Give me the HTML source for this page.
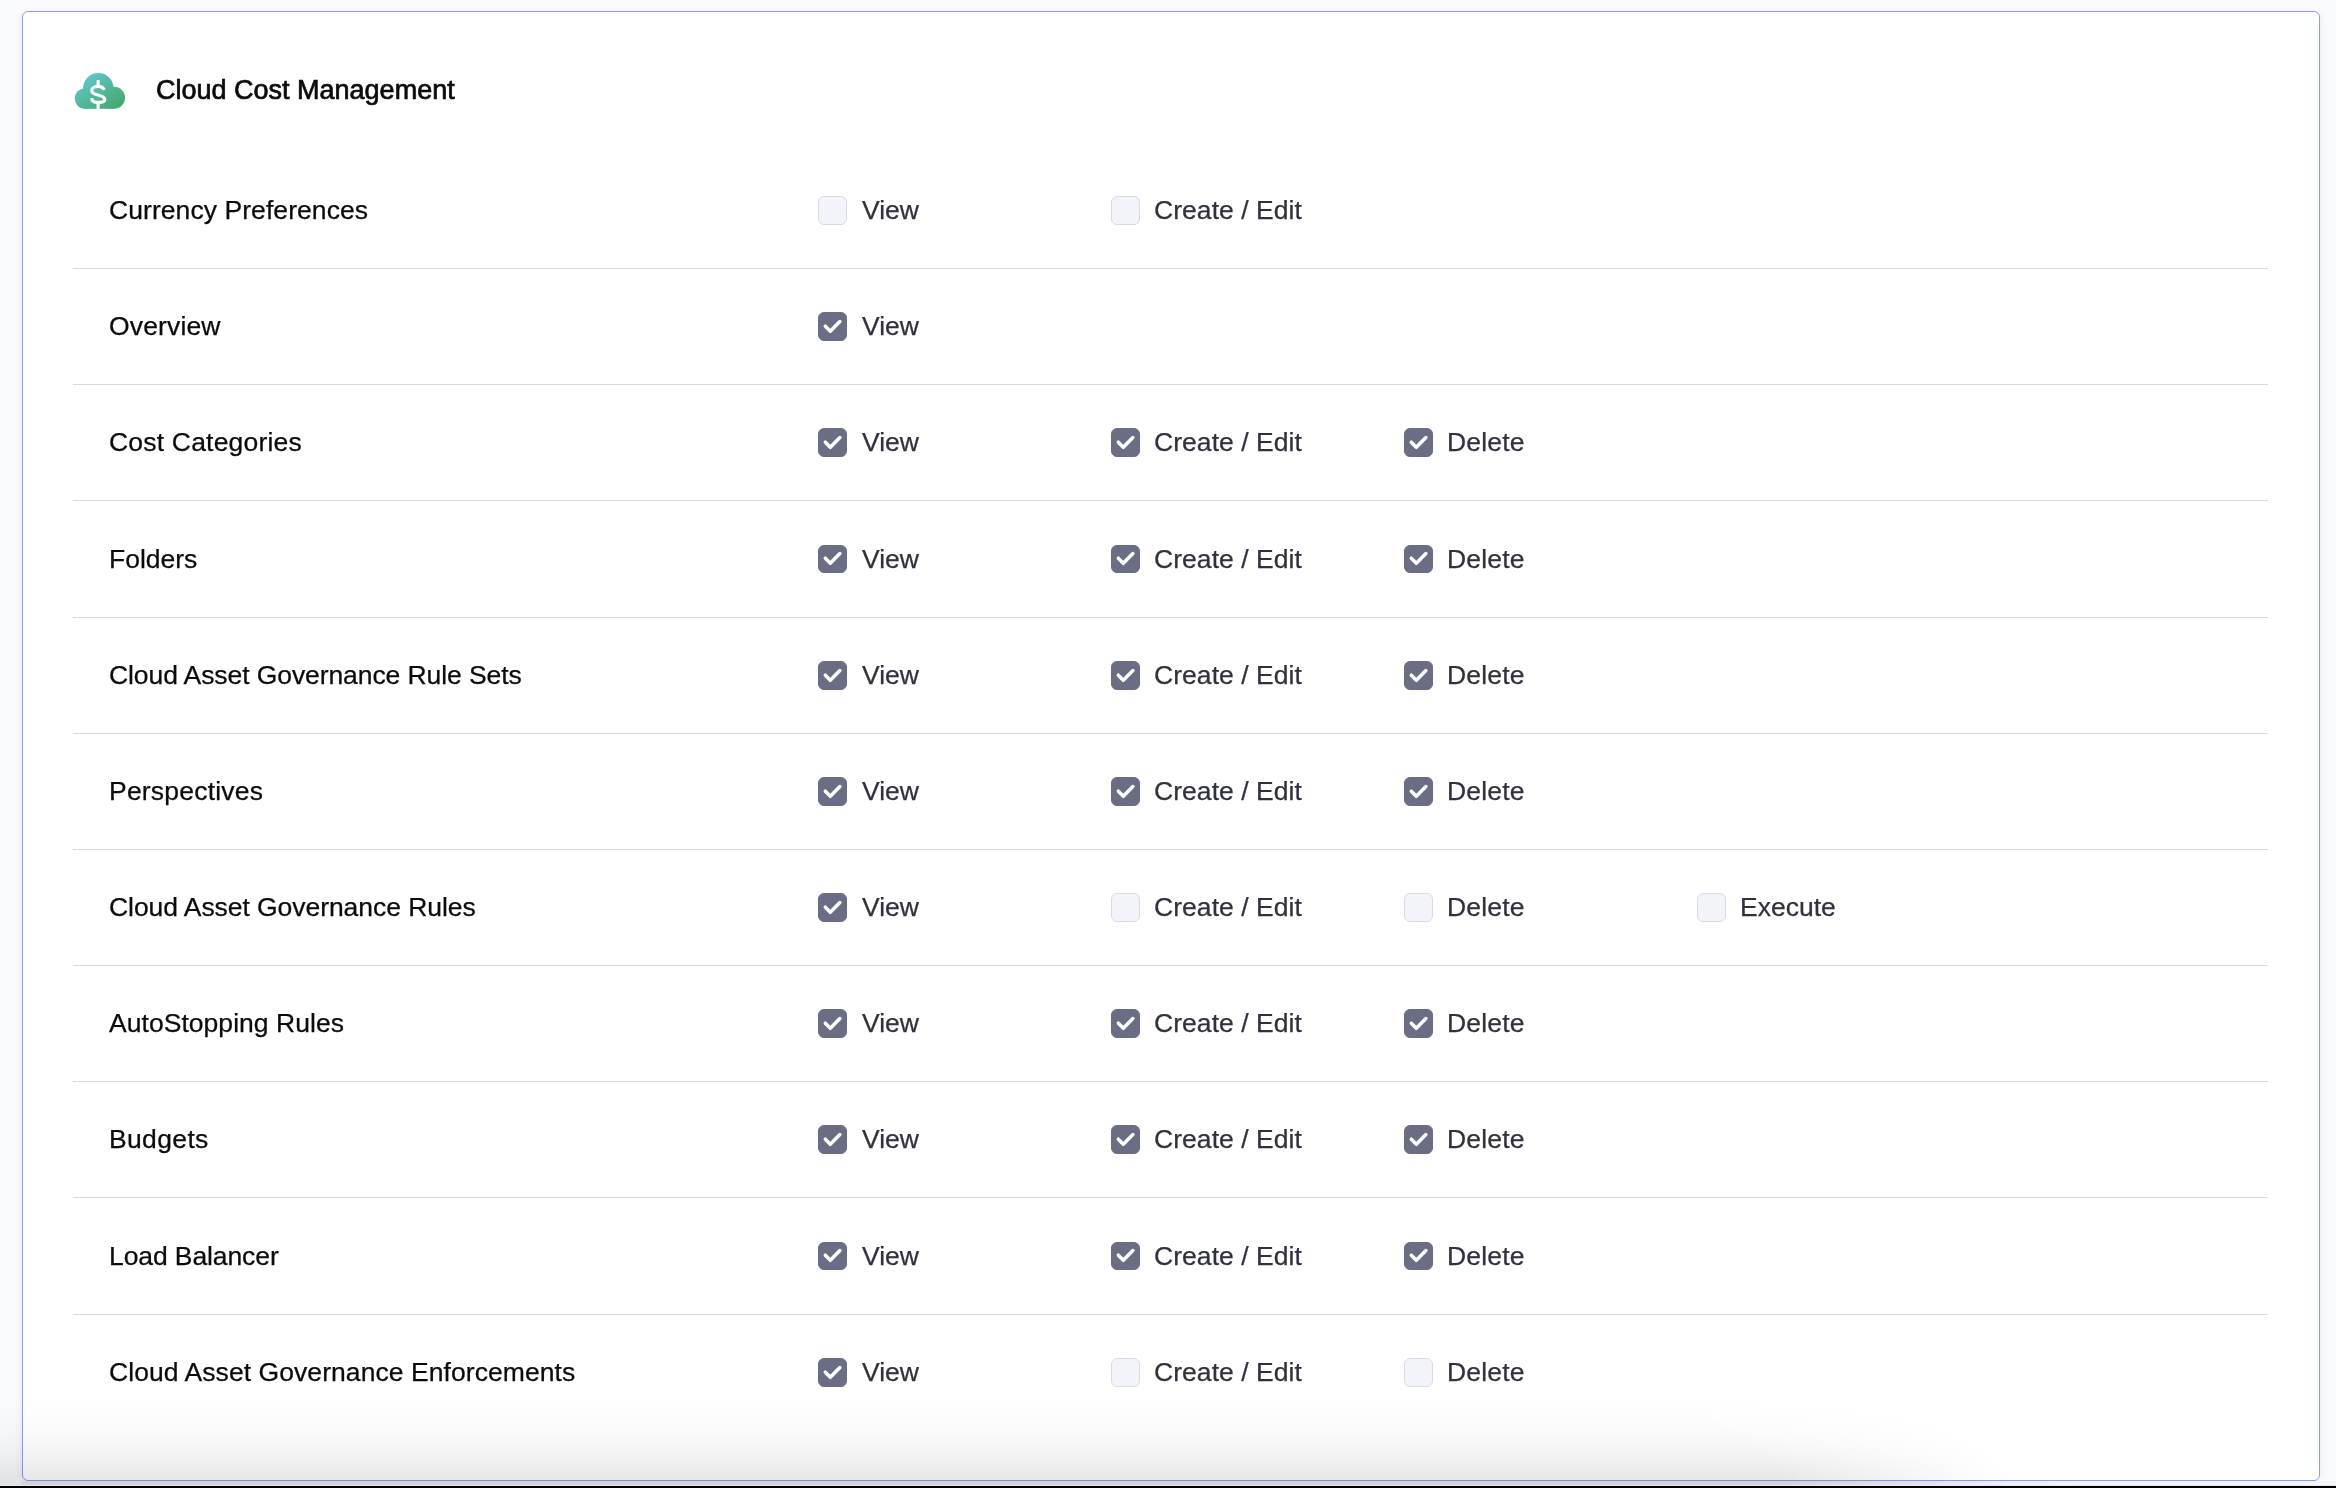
<!DOCTYPE html>
<html><head><meta charset="utf-8">
<style>
html,body{margin:0;padding:0;}
body{width:2336px;height:1488px;position:relative;overflow:hidden;background:#fafbfe;font-family:"Liberation Sans",sans-serif;}
.card{position:absolute;left:22px;top:11px;width:2296px;height:1468px;border:1px solid #8c9cf5;border-radius:6px;background:#fff;box-shadow:-4px 0 7px -3px rgba(30,40,60,0.08),4px 0 7px -3px rgba(30,40,60,0.08);}
.abs{position:absolute;}
.t{will-change:transform;}
.title{position:absolute;left:156px;top:75px;font-size:27px;letter-spacing:0px;line-height:30px;color:#0b0b0d;white-space:nowrap;-webkit-text-stroke:0.7px #0b0b0d;}
.lbl{position:absolute;left:109px;font-size:26.5px;line-height:30px;color:#0b0b0d;white-space:nowrap;-webkit-text-stroke:0.25px #0b0b0d;}
.pl{position:absolute;font-size:26.5px;line-height:30px;color:#30313e;white-space:nowrap;-webkit-text-stroke:0.25px #30313e;}
.cb{position:absolute;width:27px;height:27px;border:1px solid #d9dae5;background:#f3f3fa;border-radius:6px;}
.cb.on{background:#6b6d85;border-color:#6b6d85;}
.cb svg{position:absolute;left:-1px;top:-1px;}
.sep{position:absolute;left:73px;width:2195px;height:1px;background:#d9dae5;}
.shade{position:absolute;left:0;top:1396px;width:2336px;height:90px;background:linear-gradient(to bottom,rgba(0,0,0,0) 0%,rgba(0,0,0,.012) 26.7%,rgba(0,0,0,.027) 48.9%,rgba(0,0,0,.047) 65.6%,rgba(0,0,0,.067) 76.7%,rgba(0,0,0,.09) 91.1%,rgba(0,0,0,.1) 100%);-webkit-mask-image:linear-gradient(to right,#000 1300px,transparent 1300px),radial-gradient(710px 150px at 1300px 100%,#000 68%,rgba(0,0,0,.5) 84%,transparent 100%);}
.strip{position:absolute;left:21px;top:1481px;width:2315px;height:4px;background:rgba(0,0,0,0.05);-webkit-mask-image:linear-gradient(to right,#000 1880px,rgba(0,0,0,.4) 2060px);}
.strip2{position:absolute;left:0;top:1485px;width:2336px;height:1px;background:#e7e8ec;}
.black{position:absolute;left:0;top:1486px;width:2336px;height:2px;background:#000;}
</style></head><body>
<div class="card"></div>
<svg class="abs" style="left:60px;top:60px" width="80" height="60" viewBox="60 60 80 60">
<defs><linearGradient id="g" gradientUnits="userSpaceOnUse" x1="88" y1="72" x2="114" y2="110"><stop offset="0" stop-color="#5fc8cd"/><stop offset="1" stop-color="#47a76f"/></linearGradient></defs>
<g fill="url(#g)"><circle cx="85" cy="98.6" r="10.3"/><circle cx="98.3" cy="88.2" r="15.3"/><circle cx="114" cy="97.8" r="11"/><rect x="85" y="92" width="29" height="16.8"/></g>
<path fill="none" stroke="#fff" stroke-width="3.1" d="M104.2 89.9 C103.2 87.6 101 86.4 98 86.4 C94.6 86.4 91.75 87.9 91.75 90.4 C91.75 93 94.3 94.1 98 95.1 C101.8 96.1 104.85 97.3 104.85 99.7 C104.85 102 101.6 102.4 98 102.4 C94.4 102.4 91.75 101 91.75 97.9"/>
<path fill="none" stroke="#fff" stroke-width="3.1" d="M98.1 80 V86.8 M98.1 102 V110"/>
</svg>
<div class="title t">Cloud Cost Management</div>
<div class="lbl t" style="top:195.30px;letter-spacing:0.068px">Currency Preferences</div>
<div class="cb" style="left:818px;top:196.00px"></div>
<div class="pl t" style="left:862.00px;top:195.30px;letter-spacing:0.000px">View</div>
<div class="cb" style="left:1111px;top:196.00px"></div>
<div class="pl t" style="left:1154.40px;top:195.30px;letter-spacing:0.050px">Create / Edit</div>
<div class="sep" style="top:268px"></div>
<div class="lbl t" style="top:311.30px;letter-spacing:0.143px">Overview</div>
<div class="cb on" style="left:818px;top:312.00px"><svg width="29" height="29" viewBox="0 0 29 29"><path d="M7.3 14.2 L12.3 19.3 L21.9 9.5" fill="none" stroke="#fff" stroke-width="3.5" stroke-linecap="round" stroke-linejoin="round"/></svg></div>
<div class="pl t" style="left:862.00px;top:311.30px;letter-spacing:0.000px">View</div>
<div class="sep" style="top:384px"></div>
<div class="lbl t" style="top:427.30px;letter-spacing:0.193px">Cost Categories</div>
<div class="cb on" style="left:818px;top:428.00px"><svg width="29" height="29" viewBox="0 0 29 29"><path d="M7.3 14.2 L12.3 19.3 L21.9 9.5" fill="none" stroke="#fff" stroke-width="3.5" stroke-linecap="round" stroke-linejoin="round"/></svg></div>
<div class="pl t" style="left:862.00px;top:427.30px;letter-spacing:0.000px">View</div>
<div class="cb on" style="left:1111px;top:428.00px"><svg width="29" height="29" viewBox="0 0 29 29"><path d="M7.3 14.2 L12.3 19.3 L21.9 9.5" fill="none" stroke="#fff" stroke-width="3.5" stroke-linecap="round" stroke-linejoin="round"/></svg></div>
<div class="pl t" style="left:1154.40px;top:427.30px;letter-spacing:0.050px">Create / Edit</div>
<div class="cb on" style="left:1404px;top:428.00px"><svg width="29" height="29" viewBox="0 0 29 29"><path d="M7.3 14.2 L12.3 19.3 L21.9 9.5" fill="none" stroke="#fff" stroke-width="3.5" stroke-linecap="round" stroke-linejoin="round"/></svg></div>
<div class="pl t" style="left:1447.20px;top:427.30px;letter-spacing:0.160px">Delete</div>
<div class="sep" style="top:500px"></div>
<div class="lbl t" style="top:543.80px;letter-spacing:0.000px">Folders</div>
<div class="cb on" style="left:818px;top:545px;height:26px"><svg style="top:-2px" width="29" height="29" viewBox="0 0 29 29"><path d="M7.3 14.2 L12.3 19.3 L21.9 9.5" fill="none" stroke="#fff" stroke-width="3.5" stroke-linecap="round" stroke-linejoin="round"/></svg></div>
<div class="pl t" style="left:862.00px;top:543.80px;letter-spacing:0.000px">View</div>
<div class="cb on" style="left:1111px;top:545px;height:26px"><svg style="top:-2px" width="29" height="29" viewBox="0 0 29 29"><path d="M7.3 14.2 L12.3 19.3 L21.9 9.5" fill="none" stroke="#fff" stroke-width="3.5" stroke-linecap="round" stroke-linejoin="round"/></svg></div>
<div class="pl t" style="left:1154.40px;top:543.80px;letter-spacing:0.050px">Create / Edit</div>
<div class="cb on" style="left:1404px;top:545px;height:26px"><svg style="top:-2px" width="29" height="29" viewBox="0 0 29 29"><path d="M7.3 14.2 L12.3 19.3 L21.9 9.5" fill="none" stroke="#fff" stroke-width="3.5" stroke-linecap="round" stroke-linejoin="round"/></svg></div>
<div class="pl t" style="left:1447.20px;top:543.80px;letter-spacing:0.160px">Delete</div>
<div class="sep" style="top:617px"></div>
<div class="lbl t" style="top:660.30px;letter-spacing:-0.087px">Cloud Asset Governance Rule Sets</div>
<div class="cb on" style="left:818px;top:661.00px"><svg width="29" height="29" viewBox="0 0 29 29"><path d="M7.3 14.2 L12.3 19.3 L21.9 9.5" fill="none" stroke="#fff" stroke-width="3.5" stroke-linecap="round" stroke-linejoin="round"/></svg></div>
<div class="pl t" style="left:862.00px;top:660.30px;letter-spacing:0.000px">View</div>
<div class="cb on" style="left:1111px;top:661.00px"><svg width="29" height="29" viewBox="0 0 29 29"><path d="M7.3 14.2 L12.3 19.3 L21.9 9.5" fill="none" stroke="#fff" stroke-width="3.5" stroke-linecap="round" stroke-linejoin="round"/></svg></div>
<div class="pl t" style="left:1154.40px;top:660.30px;letter-spacing:0.050px">Create / Edit</div>
<div class="cb on" style="left:1404px;top:661.00px"><svg width="29" height="29" viewBox="0 0 29 29"><path d="M7.3 14.2 L12.3 19.3 L21.9 9.5" fill="none" stroke="#fff" stroke-width="3.5" stroke-linecap="round" stroke-linejoin="round"/></svg></div>
<div class="pl t" style="left:1447.20px;top:660.30px;letter-spacing:0.160px">Delete</div>
<div class="sep" style="top:733px"></div>
<div class="lbl t" style="top:776.30px;letter-spacing:0.209px">Perspectives</div>
<div class="cb on" style="left:818px;top:777.00px"><svg width="29" height="29" viewBox="0 0 29 29"><path d="M7.3 14.2 L12.3 19.3 L21.9 9.5" fill="none" stroke="#fff" stroke-width="3.5" stroke-linecap="round" stroke-linejoin="round"/></svg></div>
<div class="pl t" style="left:862.00px;top:776.30px;letter-spacing:0.000px">View</div>
<div class="cb on" style="left:1111px;top:777.00px"><svg width="29" height="29" viewBox="0 0 29 29"><path d="M7.3 14.2 L12.3 19.3 L21.9 9.5" fill="none" stroke="#fff" stroke-width="3.5" stroke-linecap="round" stroke-linejoin="round"/></svg></div>
<div class="pl t" style="left:1154.40px;top:776.30px;letter-spacing:0.050px">Create / Edit</div>
<div class="cb on" style="left:1404px;top:777.00px"><svg width="29" height="29" viewBox="0 0 29 29"><path d="M7.3 14.2 L12.3 19.3 L21.9 9.5" fill="none" stroke="#fff" stroke-width="3.5" stroke-linecap="round" stroke-linejoin="round"/></svg></div>
<div class="pl t" style="left:1447.20px;top:776.30px;letter-spacing:0.160px">Delete</div>
<div class="sep" style="top:849px"></div>
<div class="lbl t" style="top:892.30px;letter-spacing:-0.059px">Cloud Asset Governance Rules</div>
<div class="cb on" style="left:818px;top:893.00px"><svg width="29" height="29" viewBox="0 0 29 29"><path d="M7.3 14.2 L12.3 19.3 L21.9 9.5" fill="none" stroke="#fff" stroke-width="3.5" stroke-linecap="round" stroke-linejoin="round"/></svg></div>
<div class="pl t" style="left:862.00px;top:892.30px;letter-spacing:0.000px">View</div>
<div class="cb" style="left:1111px;top:893.00px"></div>
<div class="pl t" style="left:1154.40px;top:892.30px;letter-spacing:0.050px">Create / Edit</div>
<div class="cb" style="left:1404px;top:893.00px"></div>
<div class="pl t" style="left:1447.20px;top:892.30px;letter-spacing:0.160px">Delete</div>
<div class="cb" style="left:1697px;top:893.00px"></div>
<div class="pl t" style="left:1740.10px;top:892.30px;letter-spacing:0.000px">Execute</div>
<div class="sep" style="top:965px"></div>
<div class="lbl t" style="top:1008.30px;letter-spacing:0.041px">AutoStopping Rules</div>
<div class="cb on" style="left:818px;top:1009.00px"><svg width="29" height="29" viewBox="0 0 29 29"><path d="M7.3 14.2 L12.3 19.3 L21.9 9.5" fill="none" stroke="#fff" stroke-width="3.5" stroke-linecap="round" stroke-linejoin="round"/></svg></div>
<div class="pl t" style="left:862.00px;top:1008.30px;letter-spacing:0.000px">View</div>
<div class="cb on" style="left:1111px;top:1009.00px"><svg width="29" height="29" viewBox="0 0 29 29"><path d="M7.3 14.2 L12.3 19.3 L21.9 9.5" fill="none" stroke="#fff" stroke-width="3.5" stroke-linecap="round" stroke-linejoin="round"/></svg></div>
<div class="pl t" style="left:1154.40px;top:1008.30px;letter-spacing:0.050px">Create / Edit</div>
<div class="cb on" style="left:1404px;top:1009.00px"><svg width="29" height="29" viewBox="0 0 29 29"><path d="M7.3 14.2 L12.3 19.3 L21.9 9.5" fill="none" stroke="#fff" stroke-width="3.5" stroke-linecap="round" stroke-linejoin="round"/></svg></div>
<div class="pl t" style="left:1447.20px;top:1008.30px;letter-spacing:0.160px">Delete</div>
<div class="sep" style="top:1081px"></div>
<div class="lbl t" style="top:1124.30px;letter-spacing:0.350px">Budgets</div>
<div class="cb on" style="left:818px;top:1125.00px"><svg width="29" height="29" viewBox="0 0 29 29"><path d="M7.3 14.2 L12.3 19.3 L21.9 9.5" fill="none" stroke="#fff" stroke-width="3.5" stroke-linecap="round" stroke-linejoin="round"/></svg></div>
<div class="pl t" style="left:862.00px;top:1124.30px;letter-spacing:0.000px">View</div>
<div class="cb on" style="left:1111px;top:1125.00px"><svg width="29" height="29" viewBox="0 0 29 29"><path d="M7.3 14.2 L12.3 19.3 L21.9 9.5" fill="none" stroke="#fff" stroke-width="3.5" stroke-linecap="round" stroke-linejoin="round"/></svg></div>
<div class="pl t" style="left:1154.40px;top:1124.30px;letter-spacing:0.050px">Create / Edit</div>
<div class="cb on" style="left:1404px;top:1125.00px"><svg width="29" height="29" viewBox="0 0 29 29"><path d="M7.3 14.2 L12.3 19.3 L21.9 9.5" fill="none" stroke="#fff" stroke-width="3.5" stroke-linecap="round" stroke-linejoin="round"/></svg></div>
<div class="pl t" style="left:1447.20px;top:1124.30px;letter-spacing:0.160px">Delete</div>
<div class="sep" style="top:1197px"></div>
<div class="lbl t" style="top:1240.80px;letter-spacing:-0.100px">Load Balancer</div>
<div class="cb on" style="left:818px;top:1242px;height:26px"><svg style="top:-2px" width="29" height="29" viewBox="0 0 29 29"><path d="M7.3 14.2 L12.3 19.3 L21.9 9.5" fill="none" stroke="#fff" stroke-width="3.5" stroke-linecap="round" stroke-linejoin="round"/></svg></div>
<div class="pl t" style="left:862.00px;top:1240.80px;letter-spacing:0.000px">View</div>
<div class="cb on" style="left:1111px;top:1242px;height:26px"><svg style="top:-2px" width="29" height="29" viewBox="0 0 29 29"><path d="M7.3 14.2 L12.3 19.3 L21.9 9.5" fill="none" stroke="#fff" stroke-width="3.5" stroke-linecap="round" stroke-linejoin="round"/></svg></div>
<div class="pl t" style="left:1154.40px;top:1240.80px;letter-spacing:0.050px">Create / Edit</div>
<div class="cb on" style="left:1404px;top:1242px;height:26px"><svg style="top:-2px" width="29" height="29" viewBox="0 0 29 29"><path d="M7.3 14.2 L12.3 19.3 L21.9 9.5" fill="none" stroke="#fff" stroke-width="3.5" stroke-linecap="round" stroke-linejoin="round"/></svg></div>
<div class="pl t" style="left:1447.20px;top:1240.80px;letter-spacing:0.160px">Delete</div>
<div class="sep" style="top:1314px"></div>
<div class="lbl t" style="top:1357.30px;letter-spacing:0.065px">Cloud Asset Governance Enforcements</div>
<div class="cb on" style="left:818px;top:1358.00px"><svg width="29" height="29" viewBox="0 0 29 29"><path d="M7.3 14.2 L12.3 19.3 L21.9 9.5" fill="none" stroke="#fff" stroke-width="3.5" stroke-linecap="round" stroke-linejoin="round"/></svg></div>
<div class="pl t" style="left:862.00px;top:1357.30px;letter-spacing:0.000px">View</div>
<div class="cb" style="left:1111px;top:1358.00px"></div>
<div class="pl t" style="left:1154.40px;top:1357.30px;letter-spacing:0.050px">Create / Edit</div>
<div class="cb" style="left:1404px;top:1358.00px"></div>
<div class="pl t" style="left:1447.20px;top:1357.30px;letter-spacing:0.160px">Delete</div>
<div class="shade"></div>
<div class="strip"></div>
<div class="strip2"></div>
<div class="black"></div>
</body></html>
